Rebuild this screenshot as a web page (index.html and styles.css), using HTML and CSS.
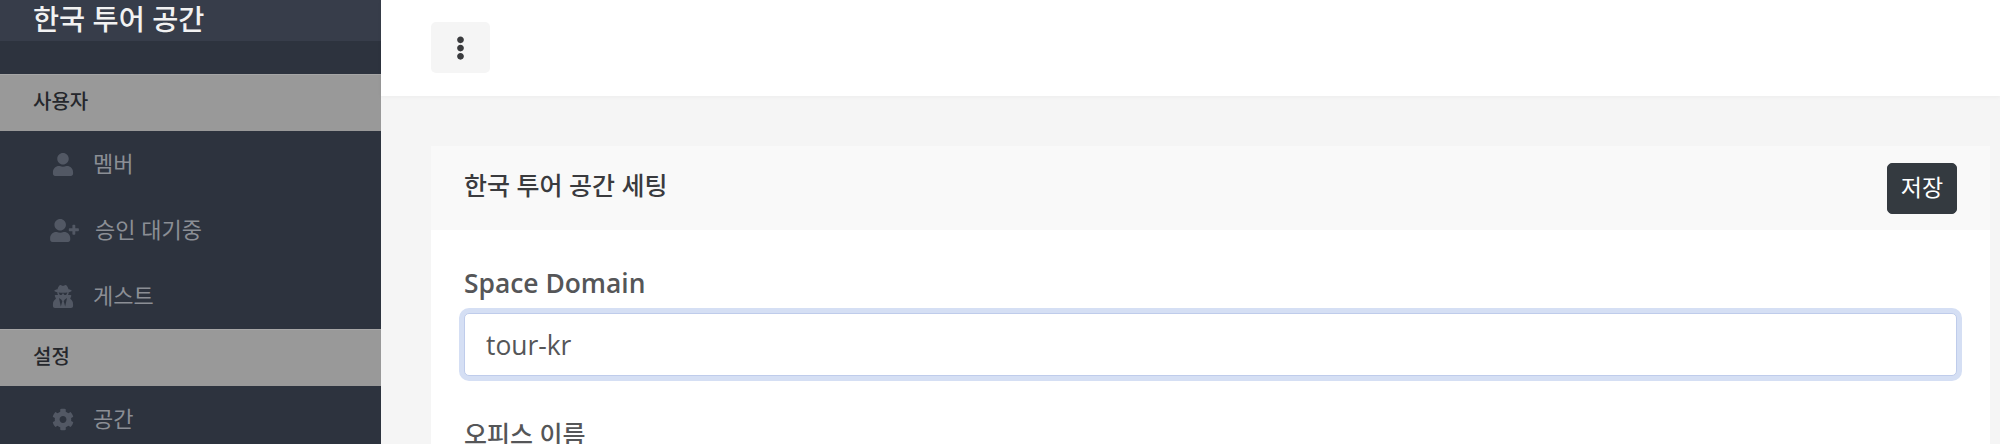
FILE: index.html
```html
<!DOCTYPE html>
<html lang="ko">
<head>
    <meta charset="UTF-8">
    <title>한국 투어 공간 세팅</title>
    <link rel="stylesheet" href="styles.css">
</head>
<body>
    <div class="layout">
        <aside class="sidebar">
            <div class="brand"><span class="brand-name">한국 투어 공간</span></div>
            <div class="section first"><span>사용자</span></div>
            <a class="item"><svg class="icon" viewBox="0 0 448 512"><path d="M224 256c70.7 0 128-57.3 128-128S294.7 0 224 0 96 57.3 96 128s57.3 128 128 128zm89.6 32h-16.7c-22.2 10.2-46.9 16-72.9 16s-50.6-5.8-72.9-16h-16.7C60.2 288 0 348.2 0 422.4V464c0 26.5 21.5 48 48 48h352c26.5 0 48-21.5 48-48v-41.6c0-74.2-60.2-134.4-134.4-134.4z"/></svg><span>멤버</span></a>
            <a class="item wide"><svg class="icon" viewBox="0 0 640 512"><path d="M624 208h-64v-64c0-8.800-7.200-16-16-16h-32c-8.800 0-16 7.200-16 16v64h-64c-8.800 0-16 7.200-16 16v32c0 8.800 7.200 16 16 16h64v64c0 8.800 7.200 16 16 16h32c8.800 0 16-7.200 16-16v-64h64c8.800 0 16-7.200 16-16v-32c0-8.800-7.200-16-16-16zm-400 48c70.700 0 128-57.300 128-128S294.700 0 224 0 96 57.300 96 128s57.300 128 128 128zm89.600 32h-16.700c-22.200 10.200-46.900 16-72.900 16s-50.600-5.800-72.900-16h-16.700C60.200 288 0 348.200 0 422.400V464c0 26.500 21.500 48 48 48h352c26.500 0 48-21.500 48-48v-41.600c0-74.200-60.200-134.400-134.400-134.400z"/></svg><span>승인 대기중</span></a>
            <a class="item"><svg class="icon" viewBox="0 0 448 512"><path d="M383.900 308.300l23.900-62.600c4-10.500-3.700-21.700-15-21.700h-58.500c11-18.900 17.800-40.600 17.800-64v-.3c39.200-7.800 64-19.100 64-31.700 0-13.300-27.300-25.100-70.100-33-9.200-32.800-27-65.800-40.600-82.800-9.500-11.900-25.900-15.600-39.500-8.800l-27.600 13.800c-9 4.500-19.600 4.500-28.600 0L182.100 3.400c-13.600-6.800-30-3.100-39.500 8.800-13.500 17-31.400 50-40.600 82.800-42.700 7.900-70 19.700-70 33 0 12.600 24.800 23.900 64 31.700v.3c0 23.400 6.800 45.100 17.800 64H56.300c-11.500 0-19.200 11.700-14.700 22.300l25.800 60.200C27.300 329.800 0 372.700 0 422.400v44.800C0 491.900 20.100 512 44.800 512h358.400c24.700 0 44.800-20.100 44.800-44.800v-44.800c0-48.400-25.800-90.400-64.100-114.100zM176 480l-41.600-192 49.600 32 24 40-32 120zm96 0l-32-120 24-40 49.600-32L272 480zm41.700-298.500c-3.900 11.900-7 24.600-16.500 33.400-10.100 9.300-48 22.400-64-25-2.800-8.400-15.400-8.400-18.300 0-17 50.200-56 32.400-64 25-9.500-8.800-12.700-21.500-16.500-33.400-.8-2.500-6.300-5.700-6.300-5.800v-10.800c28.300 3.600 61 5.800 96 5.800s67.700-2.100 96-5.800v10.800c-.1.100-5.600 3.200-6.400 5.800z"/></svg><span>게스트</span></a>
            <div class="section"><span>설정</span></div>
            <a class="item"><svg class="icon" viewBox="0 0 512 512"><path d="M487.400 315.700l-42.600-24.600c4.300-23.200 4.300-47 0-70.200l42.600-24.600c4.900-2.800 7.100-8.600 5.500-14-11.100-35.600-30-67.800-54.700-94.600-3.800-4.100-10-5.100-14.800-2.300L380.800 110c-17.900-15.400-38.500-27.300-60.800-35.100V25.800c0-5.600-3.900-10.500-9.400-11.700-36.700-8.200-74.300-7.800-109.200 0-5.500 1.200-9.400 6.100-9.400 11.700V75c-22.200 7.900-42.800 19.800-60.800 35.100L88.700 85.500c-4.900-2.800-11-1.900-14.800 2.300-24.700 26.700-43.600 58.900-54.700 94.600-1.700 5.400.6 11.200 5.500 14L67.300 221c-4.300 23.200-4.300 47 0 70.200l-42.600 24.600c-4.900 2.800-7.100 8.600-5.500 14 11.100 35.600 30 67.800 54.700 94.600 3.800 4.100 10 5.100 14.800 2.300l42.600-24.600c17.900 15.400 38.500 27.300 60.800 35.100v49.200c0 5.600 3.900 10.500 9.400 11.700 36.700 8.200 74.300 7.800 109.200 0 5.500-1.200 9.400-6.100 9.400-11.700v-49.200c22.200-7.900 42.800-19.800 60.800-35.100l42.600 24.600c4.900 2.800 11 1.900 14.800-2.300 24.700-26.700 43.600-58.900 54.700-94.600 1.500-5.500-.7-11.300-5.600-14.100zM256 336c-44.100 0-80-35.900-80-80s35.900-80 80-80 80 35.900 80 80-35.900 80-80 80z"/></svg><span>공간</span></a>
        </aside>
        <main class="main">
            <div class="topbar">
                <button class="menu-btn"><svg class="dots" viewBox="0 0 192 512"><path d="M96 184c39.800 0 72 32.200 72 72s-32.200 72-72 72-72-32.200-72-72 32.200-72 72-72zM24 80c0 39.800 32.200 72 72 72s72-32.200 72-72S135.800 8 96 8 24 40.200 24 80zm0 352c0 39.800 32.200 72 72 72s72-32.200 72-72-32.200-72-72-72-72 32.200-72 72z"/></svg></button>
            </div>
            <div class="content">
                <div class="card">
                    <div class="card-head">
                        <span class="card-title">한국 투어 공간 세팅</span>
                        <button class="save-btn">저장</button>
                    </div>
                    <div class="card-body">
                        <label class="label">Space Domain</label>
                        <input class="field" type="text" value="tour-kr">
                        <label class="label second">오피스 이름</label>
                    </div>
                </div>
            </div>
        </main>
    </div>
</body>
</html>
```

FILE: styles.css
```css
html, body {
    margin: 0;
    height: 444px;
    overflow: hidden;
}
body {
    font-family: "Open Sans", "Noto Sans CJK KR", sans-serif;
    background-color: #f5f5f5;
    color: #4f5052;
}
.layout {
    display: flex;
    height: 444px;
    overflow: hidden;
}

/* sidebar */
.sidebar {
    width: 381px;
    flex-shrink: 0;
    background-color: #2d333e;
    overflow: hidden;
}
.brand {
    height: 41px;
    background-color: #373d4a;
    padding-left: 33px;
    display: flex;
    align-items: center;
}
.brand-name {
    font-size: 28.4px;
    font-weight: 500;
    line-height: 36px;
    color: #f2f2f2;
    margin-top: -4px;
}
.section {
    height: 57px;
    padding-left: 33px;
    display: flex;
    align-items: center;
    background-color: #999999;
    color: #25272c;
    font-size: 20px;
    font-weight: 500;
    box-sizing: border-box;
    border-top: 1px solid #a6a6a6;
}
.section span {
    margin-top: -5px;
}
.section.first {
    margin-top: 33px;
}
.item {
    height: 66px;
    display: flex;
    align-items: center;
    padding-left: 52px;
    color: #8b8e95;
    font-size: 22px;
}
.item span {
    margin-left: 19px;
    margin-top: -4px;
}
.item.wide {
    padding-left: 50px;
}
.item.wide span {
    margin-left: 16px;
}
.icon {
    width: 22px;
    height: 23px;
    fill: #525864;
    flex-shrink: 0;
}
.item.wide .icon {
    width: 29px;
}

/* main */
.main {
    flex: 1;
    min-width: 0;
}
.topbar {
    height: 96px;
    background: white;
    padding: 22px 0 0 50px;
    box-sizing: border-box;
    box-shadow: 0 1px 4px rgba(0,0,0,0.04);
    position: relative;
}
.menu-btn {
    display: flex;
    align-items: center;
    justify-content: center;
    width: 59px;
    height: 51px;
    padding: 0;
    border: 0;
    border-radius: 5px;
    background-color: #f5f5f5;
}
.dots {
    height: 24px;
    fill: #3a3b3e;
}
.content {
    padding: 50px 10px 0 50px;
}
.card {
    background: white;
}
.card-head {
    height: 84px;
    background-color: #f9f9f9;
    display: flex;
    align-items: center;
    justify-content: space-between;
    padding: 0 33px;
}
.card-title {
    font-size: 25px;
    font-weight: 500;
    line-height: 34px;
    color: #3a3b3e;
    margin-top: -6px;
}
.save-btn {
    width: 70px;
    height: 51px;
    padding: 0 0 4px;
    border: 1px solid #343a40;
    border-radius: 5px;
    background-color: #343a40;
    color: white;
    font-family: inherit;
    font-size: 23px;
}
.card-body {
    padding: 35px 33px 0;
}
.label {
    display: block;
    font-size: 26.4px;
    font-weight: 600;
    line-height: 36px;
    color: #555658;
    margin-bottom: 12px;
}
.label.second {
    margin-top: 40px;
    font-size: 25px;
    font-weight: 500;
}
.field {
    display: block;
    width: 100%;
    height: 63px;
    box-sizing: border-box;
    padding: 0 21px;
    border: 1px solid #bfcceb;
    border-radius: 5px;
    box-shadow: 0 0 0 5px #d5dff4;
    outline: 0;
    background: white;
    font-family: inherit;
    font-size: 26.4px;
    color: #555658;
}
```
